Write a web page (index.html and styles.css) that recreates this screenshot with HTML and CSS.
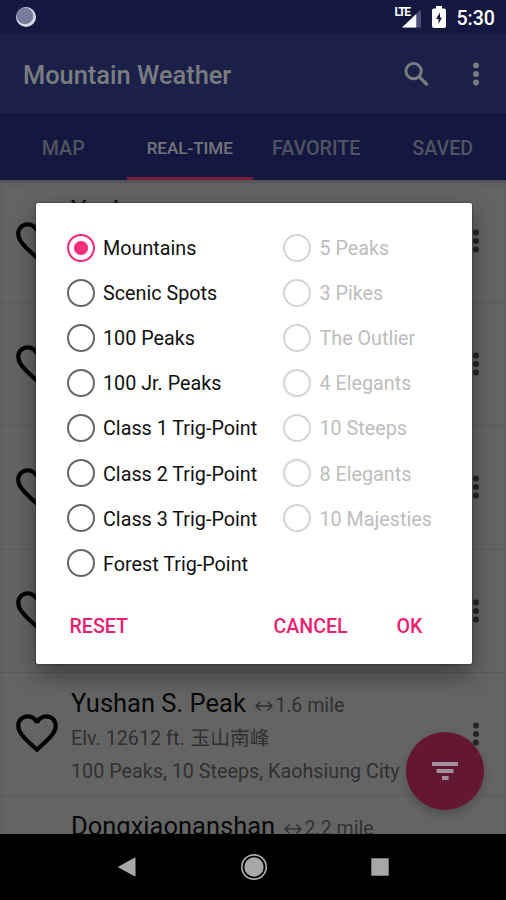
FILE: index.html
```html
<!doctype html>
<html lang="en">
    <head>
        <meta charset="utf-8">
        <title>Mountain Weather</title>
        <link rel="stylesheet" href="styles.css">
    </head>
    <body>
        <svg class="symbols">
            <symbol id="heart" viewBox="0 0 24 24">
                <path d="M16.5 3c-1.74 0-3.41.81-4.5 2.09C10.91 3.81 9.24 3 7.5 3 4.42 3 2 5.42 2 8.5c0 3.78 3.4 6.86 8.55 11.54L12 21.35l1.45-1.32C18.6 15.36 22 12.28 22 8.5 22 5.42 19.58 3 16.5 3zm-4.4 15.55l-.1.1-.1-.1C7.14 14.24 4 11.39 4 8.5 4 6.5 5.5 5 7.5 5c1.54 0 3.04.99 3.57 2.36h1.87C13.46 5.99 14.96 5 16.5 5c2 0 3.5 1.5 3.5 3.5 0 2.89-3.14 5.74-7.9 10.05z"/>
            </symbol>
            <symbol id="more" viewBox="0 0 8 24">
                <circle cx="4" cy="3.5" r="3"/>
                <circle cx="4" cy="12" r="3"/>
                <circle cx="4" cy="20.5" r="3"/>
            </symbol>
            <symbol id="distance" viewBox="0 0 18 12">
                <path d="M1 6h16M5.5 1.5L1 6l4.5 4.5M12.5 1.5L17 6l-4.5 4.5" fill="none" stroke="currentColor" stroke-width="1.5"/>
            </symbol>
        </svg>

        <div class="screen">
            <div class="status">
                <svg class="sync" viewBox="0 0 22 22">
                    <circle cx="11" cy="11" r="10" fill="#d4d6e2"/>
                    <circle cx="10" cy="10" r="8.3" fill="#777b9c"/>
                </svg>
                <div class="status-right">
                    <span class="lte">LTE</span>
                    <svg class="signal" viewBox="0 0 20 19">
                        <path d="M20 0v19H0z" fill="#4b5078"/>
                        <path d="M15 4.7V19H0z" fill="#fff"/>
                    </svg>
                    <svg class="battery" viewBox="0 0 14 22">
                        <path d="M4 0h6v2.5h2a2 2 0 0 1 2 2V20a2 2 0 0 1-2 2H2a2 2 0 0 1-2-2V4.5a2 2 0 0 1 2-2h2z" fill="#fff"/>
                        <path d="M8 6.500L4 13h2.500v5L10 11.500H8z" fill="#141840"/>
                    </svg>
                    <span class="clock">5:30</span>
                </div>
            </div>

            <div class="toolbar">
                <h1>Mountain Weather</h1>
                <svg class="search" viewBox="0 0 26 26">
                    <circle cx="10" cy="10" r="8" fill="none" stroke="currentColor" stroke-width="3"/>
                    <path d="M15.5 15.5l9 9" stroke="currentColor" stroke-width="3.4"/>
                </svg>
                <svg class="more"><use href="#more"/></svg>
            </div>

            <div class="tabs">
                <div class="tab">MAP</div>
                <div class="tab active">REAL-TIME</div>
                <div class="tab">FAVORITE</div>
                <div class="tab">SAVED</div>
            </div>

            <div class="list">
                <div class="row">
                    <svg class="heart"><use href="#heart"/></svg>
                    <div class="info"><div class="name">Yushan</div></div>
                    <svg class="more"><use href="#more"/></svg>
                </div>
                <div class="row">
                    <svg class="heart"><use href="#heart"/></svg>
                    <div class="info"></div>
                    <svg class="more"><use href="#more"/></svg>
                </div>
                <div class="row">
                    <svg class="heart"><use href="#heart"/></svg>
                    <div class="info"></div>
                    <svg class="more"><use href="#more"/></svg>
                </div>
                <div class="row">
                    <svg class="heart"><use href="#heart"/></svg>
                    <div class="info"></div>
                    <svg class="more"><use href="#more"/></svg>
                </div>
                <div class="row">
                    <svg class="heart"><use href="#heart"/></svg>
                    <div class="info">
                        <div class="name">Yushan S. Peak <span class="miles"><svg class="distance"><use href="#distance"/></svg>1.6 mile</span></div>
                        <div class="detail">Elv. 12612 ft. <span class="local">玉山南峰</span></div>
                        <div class="detail">100 Peaks, 10 Steeps, Kaohsiung City</div>
                    </div>
                    <svg class="more"><use href="#more"/></svg>
                </div>
                <div class="row">
                    <div class="heart"></div>
                    <div class="info">
                        <div class="name">Dongxiaonanshan <span class="miles"><svg class="distance"><use href="#distance"/></svg>2.2 mile</span></div>
                    </div>
                </div>
            </div>

            <div class="nav">
                <svg viewBox="0 0 28 28"><path d="M5.5 14L22 5v18z" fill="#a8a8a8" stroke="#a8a8a8" stroke-linejoin="round"/></svg>
                <svg viewBox="0 0 28 28">
                    <circle cx="14" cy="14" r="12.2" fill="none" stroke="#a8a8a8" stroke-width="1.7"/>
                    <circle cx="14" cy="14" r="9.7" fill="#a8a8a8"/>
                </svg>
                <svg viewBox="0 0 28 28"><rect x="5.3" y="5.3" width="17.4" height="17.4" fill="#a8a8a8"/></svg>
            </div>

            <div class="fab">
                <svg viewBox="0 0 26 18"><path d="M0 0h26v4H0zM4.5 7h17v4h-17zM10 14h6.5v4H10z" fill="#a2919a"/></svg>
            </div>

            <div class="dialog">
                <div class="options">
                    <div class="column">
                        <div class="option"><i class="radio checked"></i>Mountains</div>
                        <div class="option"><i class="radio"></i>Scenic Spots</div>
                        <div class="option"><i class="radio"></i>100 Peaks</div>
                        <div class="option"><i class="radio"></i>100 Jr. Peaks</div>
                        <div class="option"><i class="radio"></i>Class 1 Trig-Point</div>
                        <div class="option"><i class="radio"></i>Class 2 Trig-Point</div>
                        <div class="option"><i class="radio"></i>Class 3 Trig-Point</div>
                        <div class="option"><i class="radio"></i>Forest Trig-Point</div>
                    </div>
                    <div class="column disabled">
                        <div class="option"><i class="radio"></i>5 Peaks</div>
                        <div class="option"><i class="radio"></i>3 Pikes</div>
                        <div class="option"><i class="radio"></i>The Outlier</div>
                        <div class="option"><i class="radio"></i>4 Elegants</div>
                        <div class="option"><i class="radio"></i>10 Steeps</div>
                        <div class="option"><i class="radio"></i>8 Elegants</div>
                        <div class="option"><i class="radio"></i>10 Majesties</div>
                    </div>
                </div>
                <div class="buttons">
                    <span class="reset">RESET</span>
                    <span>CANCEL</span>
                    <span>OK</span>
                </div>
            </div>
        </div>
    </body>
</html>
```
FILE: styles.css
```css
* {
    box-sizing: border-box;
}

body {
    margin: 0;
    font-family: Roboto, "Noto Sans CJK TC", sans-serif;
}

svg {
    display: block;
    flex: none;
}

.symbols {
    display: none;
}

.screen {
    position: relative;
    display: flex;
    flex-direction: column;
    width: 506px;
    height: 900px;
    overflow: hidden;
    background: #646464;
}

.status {
    display: flex;
    align-items: center;
    justify-content: space-between;
    height: 34px;
    padding: 0 11px 0 15px;
    background: #141840;
    color: #fff;
}

.sync {
    width: 22px;
    height: 22px;
}

.status-right {
    display: flex;
    align-items: center;
}

.lte {
    align-self: flex-start;
    margin-right: -7px;
    font-size: 12px;
    font-weight: bold;
    line-height: 14px;
    letter-spacing: -1.5px;
}

.signal {
    width: 19px;
    height: 19px;
    margin: 2px 11px 0 0;
}

.battery {
    width: 14px;
    height: 22px;
    margin-right: 10px;
}

.clock {
    padding-top: 2px;
    font-size: 19.6px;
    font-weight: 500;
}

.toolbar {
    display: flex;
    align-items: center;
    height: 79px;
    padding: 0 26px 0 23px;
    background: #1a2048;
    color: #7b7c80;
}

h1 {
    flex: 1;
    margin: 0;
    padding-top: 2px;
    font-size: 25.4px;
    font-weight: 500;
}

.search {
    width: 25px;
    height: 26px;
    margin-right: 43px;
}

.more {
    width: 8px;
    height: 24px;
    fill: currentColor;
}

.tabs {
    display: flex;
    height: 67px;
    background: #141840;
    color: #515362;
}

.tab {
    flex: 1;
    padding-top: 2px;
    border-bottom: 3px solid transparent;
    font-size: 19.7px;
    font-weight: 500;
    line-height: 67px;
    text-align: center;
}

.tab.active {
    border-color: #7c1b40;
    color: #74757c;
    font-size: 17px;
    line-height: 66px;
}

.list {
    flex: 1;
    overflow: hidden;
    box-shadow: inset 0 4px 4px -2px #4c4c4c;
}

.row {
    display: flex;
    height: 123.2px;
    padding: 14px 26px 0 12px;
    border-bottom: 1px solid #5b5b5b;
}

.heart {
    width: 50px;
    height: 50px;
    margin: 21.5px 9px 0 0;
}

.info {
    flex: 1;
    color: #303030;
    white-space: nowrap;
}

.name {
    height: 34px;
    color: #080808;
    font-size: 25.5px;
    line-height: 33px;
}

.miles {
    margin-left: 3px;
    color: #303030;
    font-size: 19.6px;
}

.distance {
    display: inline-block;
    width: 18px;
    height: 12px;
    margin-right: 2px;
}

.detail {
    height: 33px;
    font-size: 19.75px;
    line-height: 35px;
}

.local {
    margin-left: 1px;
}

.row .more {
    margin-top: 35px;
    color: #242424;
}

.nav {
    display: flex;
    align-items: center;
    justify-content: space-between;
    height: 66px;
    padding: 0 112px 0 113px;
    background: #000;
}

.nav svg {
    width: 28px;
    height: 28px;
}

.fab {
    position: absolute;
    top: 732px;
    left: 406px;
    display: flex;
    align-items: center;
    justify-content: center;
    width: 78px;
    height: 78px;
    border-radius: 50%;
    background: #631733;
    box-shadow: 0 5px 8px rgba(0, 0, 0, .2);
}

.fab svg {
    width: 26px;
    height: 18px;
}

.dialog {
    position: absolute;
    top: 203px;
    left: 35.5px;
    width: 436px;
    height: 461px;
    padding: 22px 31px 0;
    border-radius: 2px;
    background: #fff;
    box-shadow: 0 0 2px #222, 0 10px 24px rgba(0, 0, 0, .4);
}

.options {
    display: flex;
    height: 379px;
}

.column {
    flex: none;
    width: 216.5px;
}

.option {
    display: flex;
    align-items: center;
    height: 45.1px;
    padding-top: 3px;
    color: #111;
    font-size: 19.75px;
    line-height: 26px;
    white-space: nowrap;
}

.disabled .option {
    color: #bdbdbd;
}

.radio {
    width: 28px;
    height: 28px;
    margin: -3px 8.5px 0 0;
    border: 2.5px solid #666;
    border-radius: 50%;
}

.disabled .radio {
    border-color: #d5d5d5;
}

.radio.checked {
    border-color: #f5277a;
    background: radial-gradient(circle, #f9307c 6.5px, #fff 7.5px);
}

.buttons {
    display: flex;
    padding: 0 18px 0 3px;
    color: #ec1e70;
    font-size: 19.6px;
    font-weight: 500;
    line-height: 45px;
}

.buttons span + span {
    margin-left: 49px;
}

.buttons .reset {
    margin-right: auto;
}
```
